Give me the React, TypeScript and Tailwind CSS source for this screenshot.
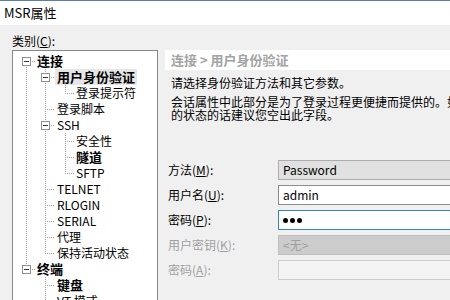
import React from 'react';

type TreeNode = {
  label: string;
  bold?: boolean;
  selected?: boolean;
  children?: TreeNode[];
};

type Row = {
  node: TreeNode;
  depth: number;
  prev: boolean;
  next: boolean;
  pipes: boolean[];
};

const TREE: TreeNode[] = [
  {
    label: '连接',
    bold: true,
    children: [
      {
        label: '用户身份验证',
        bold: true,
        selected: true,
        children: [{ label: '登录提示符' }],
      },
      { label: '登录脚本' },
      {
        label: 'SSH',
        children: [{ label: '安全性' }, { label: '隧道', bold: true }, { label: 'SFTP' }],
      },
      { label: 'TELNET' },
      { label: 'RLOGIN' },
      { label: 'SERIAL' },
      { label: '代理' },
      { label: '保持活动状态' },
    ],
  },
  {
    label: '终端',
    bold: true,
    children: [
      { label: '键盘', bold: true },
      { label: 'VT 模式' },
      { label: '仿真' },
      { label: '外观' },
    ],
  },
];

const COL_W = [19, 20, 19, 20];
const LINE_X = 10;
const DOT = '#a0a0a0';

function flatten(nodes: TreeNode[], depth = 0, pipes: boolean[] = []): Row[] {
  const rows: Row[] = [];
  nodes.forEach((n, i) => {
    const next = i < nodes.length - 1;
    rows.push({ node: n, depth, prev: i > 0, next, pipes });
    if (n.children) rows.push(...flatten(n.children, depth + 1, [...pipes, next]));
  });
  return rows;
}

function GuideCell({
  w,
  top,
  bottom,
  branch,
  box,
}: {
  w: number;
  top?: boolean;
  bottom?: boolean;
  branch?: boolean;
  box?: boolean;
}) {
  const x = LINE_X + 0.5;
  return (
    <svg width={w} height={16} className="shrink-0" shapeRendering="crispEdges">
      {top && <line x1={x} y1={0} x2={x} y2={8} stroke={DOT} strokeDasharray="1 1" />}
      {bottom && <line x1={x} y1={8} x2={x} y2={16} stroke={DOT} strokeDasharray="1 1" />}
      {branch && (
        <line x1={LINE_X} y1={8.5} x2={w} y2={8.5} stroke={DOT} strokeDasharray="1 1" />
      )}
      {box && (
        <>
          <rect x={LINE_X - 4 + 0.5} y={4.5} width={8} height={8} fill="#fff" stroke="#919191" />
          <line x1={LINE_X - 2} y1={8.5} x2={LINE_X + 3} y2={8.5} stroke="#333" />
        </>
      )}
    </svg>
  );
}

function TreeRow({ row }: { row: Row }) {
  const { node } = row;
  return (
    <div className="flex h-[16px] items-center">
      {row.pipes.map((p, i) => (
        <GuideCell key={i} w={COL_W[i]} top={p} bottom={p} />
      ))}
      <GuideCell
        w={COL_W[row.depth]}
        top={row.depth > 0 || row.prev}
        bottom={row.next}
        branch
        box={!!node.children}
      />
      <span
        className={`h-[16px] whitespace-nowrap px-[2px] leading-[16px] ${
          node.bold ? 'text-[13px] font-bold' : 'text-[12px]'
        } ${node.selected ? 'bg-[#e6e6e6]' : ''}`}
      >
        {node.label}
      </span>
    </div>
  );
}

function FormRow({
  label,
  mnemonic,
  disabled,
  children,
}: {
  label: string;
  mnemonic: string;
  disabled?: boolean;
  children: React.ReactNode;
}) {
  return (
    <div className="flex h-[20px] items-center">
      <div
        className={`w-[110px] shrink-0 whitespace-nowrap ${
          disabled ? 'text-[#a0a0a0]' : 'text-black'
        }`}
      >
        {label}(<span className="underline">{mnemonic}</span>):
      </div>
      {children}
    </div>
  );
}

export default function App() {
  const rows = flatten(TREE);

  return (
    <div className="h-[300px] w-[450px] overflow-hidden bg-[#f0f0f0] font-['Noto_Sans_CJK_SC',sans-serif] text-[12px] text-black">
      <div className="flex h-[25px] items-center border-t border-[#5a7dab] bg-white pl-[4px] text-[13px]">
        MSR属性
      </div>

      <div className="flex pl-[12px] pt-[8px]">
        <div className="w-[146px] shrink-0">
          <div className="h-[17px] leading-[16px]">
            类别(<span className="underline">C</span>):
          </div>
          <div className="h-[270px] border border-[#828790] bg-white pl-[3px] pt-[2px]">
            {rows.map((r, i) => (
              <TreeRow key={i} row={r} />
            ))}
          </div>
        </div>

        <div className="ml-[7px] mt-[17px] min-w-0 flex-1">
          <div className="flex h-[20px] items-center bg-white pl-[6px] text-[13px] font-bold whitespace-nowrap text-[#a3a3a3]">
            连接 &gt; 用户身份验证
          </div>

          <div className="mt-[5px] pl-[6px] leading-[16px] whitespace-nowrap">
            请选择身份验证方法和其它参数。
          </div>
          <div className="mt-[4px] pl-[6px] leading-[13px] whitespace-nowrap">
            <div>会话属性中此部分是为了登录过程更便捷而提供的。如果您希望保持更安全</div>
            <div>的状态的话建议您空出此字段。</div>
          </div>

          <div className="mt-[39px] flex flex-col gap-[5px] pl-[3px]">
            <FormRow label="方法" mnemonic="M">
              <div className="flex h-[20px] w-[200px] shrink-0 items-center border border-[#adadad] bg-[#e1e1e1] pl-[4px]">
                Password
              </div>
            </FormRow>
            <FormRow label="用户名" mnemonic="U">
              <div className="flex h-[20px] w-[200px] shrink-0 items-center border border-[#8c8c8c] bg-white pl-[4px]">
                admin
              </div>
            </FormRow>
            <FormRow label="密码" mnemonic="P">
              <div className="flex h-[20px] w-[200px] shrink-0 items-center gap-[2px] border border-[#2f8ab3] bg-white pl-[4px]">
                <span className="h-[5px] w-[5px] rounded-full bg-black" />
                <span className="h-[5px] w-[5px] rounded-full bg-black" />
                <span className="h-[5px] w-[5px] rounded-full bg-black" />
              </div>
            </FormRow>
            <FormRow label="用户密钥" mnemonic="K" disabled>
              <div className="flex h-[20px] w-[200px] shrink-0 items-center border border-[#bfbfbf] bg-[#cccccc] pl-[4px] text-[#a0a0a0]">
                &lt;无&gt;
              </div>
            </FormRow>
            <FormRow label="密码" mnemonic="A" disabled>
              <div className="h-[20px] w-[200px] shrink-0 border border-[#cccccc] bg-[#f4f4f4]" />
            </FormRow>
          </div>
        </div>
      </div>
    </div>
  );
}
